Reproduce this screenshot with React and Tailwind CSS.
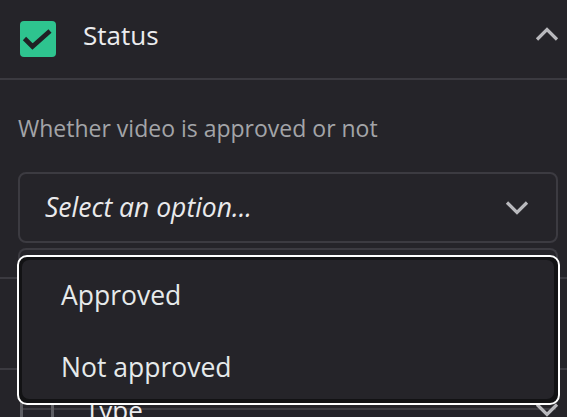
import React from "react";

function Chevron({ up = false, className = "" }) {
  return (
    <svg viewBox="0 0 24 14" className={className} fill="none">
      <polyline
        points={up ? "2,12.5 12,2.5 22,12.5" : "2,1.5 12,11.5 22,1.5"}
        stroke="currentColor"
        strokeWidth="3.2"
        strokeLinejoin="miter"
      />
    </svg>
  );
}

export default function App() {
  return (
    <div className="relative w-[567px] h-[417px] overflow-hidden bg-[#252429] font-['Open_Sans',sans-serif]">
      {/* Header */}
      <div className="flex items-center h-[80px] pl-5 pr-[8px] border-b-2 border-[#3b3a40]">
        <div className="w-9 h-9 rounded-[4px] bg-[#2ec48f] flex items-center justify-center">
          <svg viewBox="0 0 36 36" className="w-9 h-9" fill="none">
            <polyline points="4.5,17.5 12.5,25.5 30,10" stroke="#202024" strokeWidth="4.6" />
          </svg>
        </div>
        <span className="ml-[27px] mb-[8px] text-[26px] leading-none text-[#ececee]">Status</span>
        <Chevron up className="ml-auto mb-[10px] w-[24px] h-[14px] text-[#b9b9bd]" />
      </div>

      {/* Body */}
      <div className="pl-[18px] pr-[9px]">
        <p className="pt-[34px] text-[23px] leading-[28px] text-[#a3a4a8]">
          Whether video is approved or not
        </p>
        <div className="mt-[30px] h-[71px] border-2 border-[#3c3b41] rounded-[8px] flex items-center pl-[25px] pr-[27px]">
          <span className="italic text-[26.5px] text-[#eaeaec]">Select an option...</span>
          <Chevron className="ml-auto w-[24px] h-[14px] text-[#b9b9bd]" />
        </div>
      </div>

      {/* Content underneath the open menu */}
      <div className="mt-[5px]">
        <div className="ml-[18px] mr-[9px] h-[29px] rounded-t-[8px] border-2 border-b-0 border-[#3c3b41]" />
        <div className="h-[2px] bg-[#3b3a40]" />
        <div className="h-[89px]" />
        <div className="h-[2px] bg-[#3b3a40]" />
        <div className="h-[38px]" />
        <div className="ml-[20px] mr-[11px] h-[2px] bg-[#3c3b41]" />
        <div className="-mt-[33px] flex items-start pl-5 pr-[8px] pt-4">
          <div className="w-[34px] h-9 rounded-[4px] border-[3px] border-[#5d5d62]" />
          <span className="ml-[31px] mt-[4px] text-[26px] leading-none text-[#ececee]">Type</span>
          <Chevron className="ml-auto mt-[10px] w-[24px] h-[14px] text-[#b9b9bd]" />
        </div>
      </div>

      {/* Open dropdown menu */}
      <div className="absolute left-[17px] top-[255px] w-[543px] h-[150px] rounded-[10px] border-2 border-white bg-[#121214] pt-[3px] pl-[3px] pr-[4px] pb-[4px]">
        <div className="h-full rounded-[7px] bg-[#252429] overflow-hidden">
          <div className="pl-[39px] pt-[17px] pb-[18px] text-[26.5px] leading-[36px] text-[#e6eaeb]">Approved</div>
          <div className="pl-[39px] pt-[18px] text-[26.5px] leading-[36px] text-[#e6eaeb]">Not approved</div>
        </div>
      </div>
    </div>
  );
}
